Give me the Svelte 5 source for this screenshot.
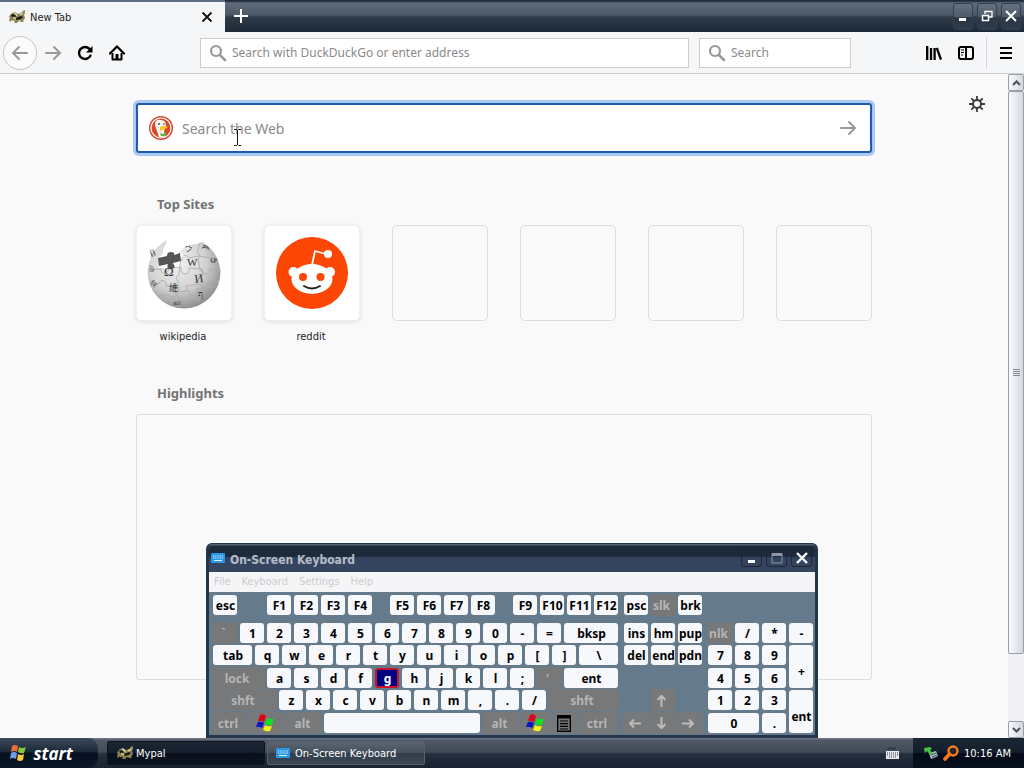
<script lang="ts">
	type Key = { t?: string; w?: number; off?: boolean; gap?: boolean; on?: boolean; icon?: string };

	const k = (t: string, w = 24): Key => ({ t, w });
	const off = (t: string, w = 24): Key => ({ t, w, off: true });
	const gap = (w: number): Key => ({ w, gap: true });
	const keys = (s: string): Key[] => s.split(' ').map((t) => ({ t, w: 24, on: t === 'g' }));

	const fnRow: Key[] = [k('esc'), gap(24), ...keys('F1 F2 F3 F4'), gap(12), ...keys('F5 F6 F7 F8'), gap(12), ...keys('F9 F10 F11 F12')];
	const mainRows: Key[][] = [
		[off('`'), ...keys('1 2 3 4 5 6 7 8 9 0 - ='), k('bksp', 54)],
		[k('tab', 39), ...keys('q w e r t y u i o p [ ]'), k('\\', 39)],
		[off('lock', 51), ...keys('a s d f g h j k l ;'), off("'"), k('ent', 54)],
		[off('shft', 63), ...keys('z x c v b n m , . /'), off('shft', 69)],
		[off('ctrl', 33), { w: 35, off: true, icon: 'win' }, off('alt', 34), k(' ', 156), off('alt', 36), { w: 30, off: true, icon: 'win' }, { w: 21, off: true, icon: 'menu' }, off('ctrl', 39)]
	];
	const navTop: Key[] = [k('psc'), off('slk'), k('brk')];
	const navRows: Key[][] = [keys('ins hm pup'), keys('del end pdn'), [], [gap(24), { w: 24, off: true, icon: 'up' }], ['left', 'down', 'right'].map((icon) => ({ w: 24, off: true, icon }))];
	const numpad = ['nlk', '/', '*', '-', '7', '8', '9', '+', '4', '5', '6', '1', '2', '3', 'ent', '0', '.'];

	const turns: Record<string, number> = { up: 0, right: 90, down: 180, left: 270 };
	const sites = ['wikipedia', 'reddit', '', '', '', ''];
	const menus = ['File', 'Keyboard', 'Settings', 'Help'];
</script>

{#snippet magnifier()}
	<svg class="magnifier" width="18" height="18" viewBox="0 0 18 18" aria-hidden="true">
		<circle cx="7" cy="7" r="5" fill="none" stroke="#999" stroke-width="2.200" />
		<path d="M10.800 10.800L16 16" stroke="#999" stroke-width="2.600" stroke-linecap="round" />
	</svg>
{/snippet}

{#snippet critter()}
	<svg width="17" height="16" viewBox="0 0 17 16" aria-hidden="true">
		<path d="M1 6l2-2 3-1 3 2 3-1 2-2 2-1 0 3-1 2 1 3-2 3 1 1-3 0-2-2-2 3-3 0 1-2-3-1-2 2-1-2 1-2-1-1z" fill="#8a8258" />
		<path d="M2 6l3-1 2 2-2 2-2-1zM7 9l5-2 2 1-2 2-5 1z" fill="#181b12" />
		<path d="M5 4l2 1 1 2M11 6l3-2M4 8l3 2" stroke="#e7d49f" stroke-width="1.400" fill="none" />
		<path d="M3 12l3-2M9 12l4-1M14 2l2 1" stroke="#b19a43" />
	</svg>
{/snippet}

{#snippet keyboardIcon()}
	<svg width="14" height="10" viewBox="0 0 14 10" aria-hidden="true">
		<rect width="14" height="10" rx="1" fill="#2a98e8" />
		<path d="M2 3h10M2 5h10" stroke="#d7f1ff" stroke-width="1.200" stroke-dasharray="1 .8" />
		<path d="M3 7.500h8" stroke="#d7f1ff" stroke-width="1" />
	</svg>
{/snippet}

{#snippet glyph(name: string)}
	{#if name === 'win'}
		<svg width="19" height="18" viewBox="0 0 19 18" aria-hidden="true">
			<path d="M4 1q3-2 6 1l-2 6q-3-2-6-1z" fill="#e00018" />
			<path d="M11 4q3 2 7 1l-2 6q-4 1-7-1z" fill="#0ee321" />
			<path d="M2 8q3-1 6 1l-2 5q-3-2-6-1z" fill="#0710cb" />
			<path d="M9 11q3 2 7 1l-2 5q-3 1-7-1z" fill="#f5f215" />
		</svg>
	{:else if name === 'menu'}
		<svg width="14" height="17" viewBox="0 0 14 17" aria-hidden="true">
			<rect x=".7" y=".7" width="12.600" height="15.600" fill="#777" stroke="#000" stroke-width="1.400" />
			<path d="M1 2h12" stroke="#000" stroke-width="3" />
			<path d="M3 6h8M3 8.700h8M3 11.400h8M3 14h8" stroke="#000" stroke-width="1.200" />
		</svg>
	{:else}
		<svg width="13" height="13" viewBox="0 0 13 13" aria-hidden="true">
			<path d="M6.500 13V2M2.500 6l4-4 4 4" transform="rotate({turns[name]} 6.500 6.500)" fill="none" stroke="#bbb" stroke-width="2" />
		</svg>
	{/if}
{/snippet}

{#snippet keyRow(row: Key[])}
	<div class="row">
		{#each row as key}
			{#if key.gap}
				<span class="space" style="width: {key.w}px"></span>
			{:else}
				<button class="key" class:off={key.off} class:on={key.on} style="width: {key.w}px" aria-label={key.icon ?? (key.t === ' ' ? 'space' : key.t)}>
					{#if key.icon}{@render glyph(key.icon)}{:else}{key.t}{/if}
				</button>
			{/if}
		{/each}
	</div>
{/snippet}

<div class="screen">
	<header class="titlebar">
		<div class="tab">
			{@render critter()}
			<span>New Tab</span>
			<button aria-label="Close tab">
				<svg width="12" height="12" viewBox="0 0 12 12"><path d="M1.500 1.500l9 9M10.500 1.500l-9 9" stroke="#111" stroke-width="1.800" /></svg>
			</button>
		</div>
		<button class="new-tab" aria-label="New tab">
			<svg width="14" height="14" viewBox="0 0 14 14"><path d="M7 0v14M0 7h14" stroke="#fff" stroke-width="2" /></svg>
		</button>
		<div class="window-buttons">
			<button aria-label="Minimize"><svg width="12" height="12"><path d="M2 9.500h7" stroke="#fff" stroke-width="3" /></svg></button>
			<button aria-label="Restore"><svg width="12" height="12"><path d="M4 4V1.500h7V7H8" fill="none" stroke="#fff" stroke-width="1.300" /><path d="M1.500 5.500h6v5h-6zM1 5.500h7" fill="none" stroke="#fff" stroke-width="1.500" /></svg></button>
			<button aria-label="Close"><svg width="12" height="12"><path d="M1 1l10 10M11 1L1 11" stroke="#fff" stroke-width="2" /></svg></button>
		</div>
	</header>

	<nav class="toolbar">
		<button class="back" aria-label="Back">
			<svg width="18" height="16" viewBox="0 0 18 16"><path d="M16 8H2M8 2L2 8l6 6" fill="none" stroke="#999" stroke-width="2" stroke-linecap="round" /></svg>
		</button>
		<button class="tool" aria-label="Forward">
			<svg width="18" height="16" viewBox="0 0 18 16"><path d="M2 8h14M10 2l6 6-6 6" fill="none" stroke="#999" stroke-width="2" stroke-linecap="round" /></svg>
		</button>
		<button class="tool" aria-label="Reload">
			<svg width="16" height="16" viewBox="0 0 16 16"><path d="M12.500 4A6 6 0 1 0 13.500 10.500" fill="none" stroke="#000" stroke-width="2.400" stroke-linecap="round" /><path d="M15.500 1v6.500H9z" fill="#000" /></svg>
		</button>
		<button class="tool" aria-label="Home">
			<svg width="16" height="16" viewBox="0 0 16 16"><path d="M1 8.500L8 1.500l7 7" fill="none" stroke="#000" stroke-width="2.200" stroke-linecap="round" stroke-linejoin="round" /><path d="M3.500 8v6.500h9V8" fill="none" stroke="#000" stroke-width="2" stroke-linejoin="round" /><path d="M6.500 14V9h3v5z" fill="#000" /></svg>
		</button>
		<label class="field address">
			{@render magnifier()}
			<input aria-label="Address" placeholder="Search with DuckDuckGo or enter address" />
		</label>
		<label class="field quick">
			{@render magnifier()}
			<input aria-label="Search" placeholder="Search" />
		</label>
		<div class="tools">
			<button class="tool" aria-label="Library">
				<svg width="16" height="16" viewBox="0 0 16 16"><path d="M1.200 1v14M5 3v12M8.600 3v12M10.800 3l4.200 11.500" stroke="#000" stroke-width="2.300" /></svg>
			</button>
			<button class="tool" aria-label="Sidebars">
				<svg width="16" height="14" viewBox="0 0 16 14"><rect x="1" y="1" width="14" height="12" rx="2" fill="none" stroke="#000" stroke-width="2" /><path d="M8 1v12" stroke="#000" stroke-width="2" /><path d="M3 4h3M3 6.500h3M3 9h2" stroke="#000" /></svg>
			</button>
			<button class="tool menu" aria-label="Menu">
				<svg width="12" height="12" viewBox="0 0 12 12"><path d="M0 1h12M0 6h12M0 11h12" stroke="#000" stroke-width="2" /></svg>
			</button>
		</div>
	</nav>

	<div class="viewport">
		<main>
			<button class="gear" aria-label="Preferences">
				<svg width="16" height="16" viewBox="0 0 16 16">
					<circle cx="8" cy="8" r="4" fill="none" stroke="#3b3b3b" stroke-width="2" />
					<path d="M8 0v4M8 12v4M0 8h4M12 8h4M2.300 2.300l2.800 2.800M10.900 10.900l2.800 2.800M13.700 2.300l-2.800 2.800M5.100 10.900l-2.800 2.800" stroke="#3b3b3b" stroke-width="1.800" />
				</svg>
			</button>
			<div class="content">
				<form class="web-search">
					<svg width="24" height="24" viewBox="0 0 24 24" aria-hidden="true">
						<circle cx="12" cy="12" r="12" fill="#d9472c" />
						<circle cx="12" cy="12" r="10" fill="#dc4a2e" stroke="#fff" stroke-width="1.200" />
						<path d="M7 5q2-2 5-1 5 0 5 6l-2 5 1 6q-4 1-6 0L7 12q-2-4 0-7z" fill="#f5f3ec" />
						<path d="M11 11q4-2 8 0l-3 2-5 2z" fill="#f8c51c" />
						<path d="M11 17l3 1 3-2v4l-5 0z" fill="#61b44b" />
						<circle cx="10" cy="8" r="1" fill="#31566e" /><circle cx="15" cy="8" r=".8" fill="#31566e" />
					</svg>
					<input aria-label="Search the Web" placeholder="Search the Web" />
					<button type="button" aria-label="Go">
						<svg width="18" height="16" viewBox="0 0 18 16"><path d="M2 8h14M10 2l6 6-6 6" fill="none" stroke="#999" stroke-width="2" stroke-linecap="round" /></svg>
					</button>
					<svg class="caret" width="9" height="17" viewBox="0 0 9 17" aria-hidden="true"><path d="M1 .5h2.500l1 1 1-1H8M4.500 1v15M1 16.500h2.500l1-1 1 1H8" fill="none" stroke="#111" /></svg>
				</form>

				<h2>Top Sites</h2>
				<div class="sites">
					{#each sites as site}
						<a class="site" href="#top" aria-label={site || 'Empty tile'}>
							<span class="tile" class:filled={site}>
								{#if site === 'wikipedia'}
									<svg width="76" height="72" viewBox="0 0 76 72" aria-hidden="true">
										<defs>
											<radialGradient id="globe" cx=".4" cy=".35" r=".7">
												<stop offset="0" stop-color="#f4f4f4" />
												<stop offset=".55" stop-color="#d2d2d2" />
												<stop offset="1" stop-color="#858585" />
											</radialGradient>
											<clipPath id="shell">
												<path d="M21 3l-1 4-3 5 0 4-4 5 0 10 20-1 1-8 4-3-5-4 5-4 4 1 2-4 7-1 5-2q17 10 18.500 30a36.500 36.500 0 0 1-73 0Q3 13 21 3z" />
											</clipPath>
										</defs>
										<g clip-path="url(#shell)">
											<rect width="76" height="72" fill="url(#globe)" />
											<path d="M3 33l12-1q0 5 4 4t4-5l12-1q-1 7 4 7t4-6l13 1q0 6 4 5t4-5l12 0M2 46l11 1q1-5 5-3t2 5l13 1q-1 5 4 5t3-6l14-2q1 5 5 4t2-5l14-2M8 60l14-3q2 4 6 3t1-5l14-1q0 6 5 4t3-6l18-2M15 22l-2 10M34 18q5 2 0 8l-1 12q-5 2-1 6l0 26M54 6l-3 9q5 2 1 6l2 12q5 1 2 6l1 11q4 2 0 6l-5 9M34 21q6-5 9 0l9-2 20 3" fill="none" stroke="#aaa" stroke-width=".8" />
										</g>
										<path d="M12 21l9-2q0-4 4-4t3 3l6-2 1 8-8 2q4 6-2 6-5 0-3-5l-9 2z" fill="#555" />
										<g fill="#333" font-family="Liberation Serif, serif" font-size="11">
											<text x="18" y="39" font-size="13">Ω</text>
											<text x="41" y="29">W</text>
											<text x="49" y="46" font-size="12" transform="rotate(-7 49 46)">И</text>
											<text x="23" y="54" font-size="9" font-family="Noto Sans CJK SC, sans-serif">維</text>
											<text x="38" y="13" font-size="8" transform="rotate(15 38 13)">ウ</text>
											<text x="55" y="11" font-size="8" transform="rotate(35 55 11)">ም</text>
											<text x="64" y="22" font-size="9" transform="rotate(35 64 22)">ي</text>
											<text x="3" y="35" font-size="7">উ</text>
											<text x="4" y="48" font-size="7" transform="rotate(20 4 48)">ਵਿ</text>
											<text x="52" y="61" font-size="10">ף</text>
											<text x="27" y="68" font-size="7">வி</text>
											<text x="5" y="20" font-size="8" transform="rotate(-20 5 20)">Й</text>
										</g>
									</svg>
								{:else if site === 'reddit'}
									<svg width="72" height="72" viewBox="0 0 72 72" aria-hidden="true">
										<circle cx="36" cy="36" r="36" fill="#fc4605" />
										<circle cx="17.500" cy="35" r="5" fill="#fff" /><circle cx="54" cy="35" r="5" fill="#fff" />
										<ellipse cx="36" cy="42" rx="20.500" ry="15" fill="#fff" />
										<path d="M36 28l3-14 11 3" fill="none" stroke="#fff" stroke-width="1.800" />
										<circle cx="52" cy="17" r="4" fill="#fff" />
										<circle cx="27" cy="40" r="4" fill="#fc4605" /><circle cx="44.500" cy="40" r="4" fill="#fc4605" />
										<path d="M28 49q8 5 16 0" fill="none" stroke="#222" stroke-width="2" stroke-linecap="round" />
									</svg>
								{/if}
							</span>
							<span class="name">{site}</span>
						</a>
					{/each}
				</div>

				<h2>Highlights</h2>
				<div class="highlights"></div>
			</div>
		</main>
		<div class="scrollbar" aria-hidden="true">
			<div class="arrow"><svg width="9" height="6"><path d="M1 5l3.500-3.500L8 5" fill="none" stroke="#4c505c" stroke-width="2" /></svg></div>
			<div class="thumb"><svg width="7" height="7"><path d="M0 .5h7M0 2.500h7M0 4.500h7M0 6.500h7" stroke="#858b96" /></svg></div>
			<div class="track"></div>
			<div class="arrow"><svg width="9" height="6"><path d="M1 1l3.500 3.500L8 1" fill="none" stroke="#4c505c" stroke-width="2" /></svg></div>
		</div>
	</div>

	<section class="osk" aria-label="On-Screen Keyboard">
		<div class="osk-title">
			{@render keyboardIcon()}
			<strong>On-Screen Keyboard</strong>
			<button aria-label="Minimize keyboard"><svg width="12" height="12"><path d="M2 9.500h7" stroke="#fff" stroke-width="3" /></svg></button>
			<button aria-label="Maximize keyboard"><svg width="12" height="12"><path d="M1 2.500h10" stroke="#8e98a5" stroke-width="3" /><rect x="1" y="2" width="10" height="9" fill="none" stroke="#8e98a5" /></svg></button>
			<button aria-label="Close keyboard"><svg width="12" height="12"><path d="M1 1l10 10M11 1L1 11" stroke="#fff" stroke-width="2.400" /></svg></button>
		</div>
		<div class="osk-menu">
			{#each menus as menu}<button>{menu}</button>{/each}
		</div>
		<div class="board">
			<div class="block">
				{@render keyRow(fnRow)}
				<div class="rows">
					{#each mainRows as row}{@render keyRow(row)}{/each}
				</div>
			</div>
			<div class="block">
				{@render keyRow(navTop)}
				<div class="rows">
					{#each navRows as row}{@render keyRow(row)}{/each}
				</div>
			</div>
			<div class="numpad">
				{#each numpad as n}
					<button class="key" class:off={n === 'nlk'} class:tall={n === '+' || n === 'ent'} class:wide={n === '0'}>{n}</button>
				{/each}
			</div>
		</div>
	</section>

	<footer>
		<button class="start">
			<svg width="18" height="18" viewBox="0 0 18 18" aria-hidden="true">
				<path d="M3 2q3-2 6 0L8 8q-3-2-6 0z" fill="#ef6c35" />
				<path d="M10 3q3 2 7 0l-2 6q-3 1-6-1z" fill="#85c743" />
				<path d="M2 9q3-2 6 0l-1 6q-3-2-6 0z" fill="#719ee9" />
				<path d="M9 10q3 2 6 0l-1 6q-3 2-6 0z" fill="#f8c93b" />
			</svg>
			start
		</button>
		<button class="task active">{@render critter()}Mypal</button>
		<button class="task">{@render keyboardIcon()}On-Screen Keyboard</button>
		<svg class="layout" width="13" height="13" viewBox="0 0 13 13" aria-hidden="true">
			<path d="M3 3V1h3v1h3V0" fill="none" stroke="#222b36" />
			<rect y="4" width="13" height="8" fill="#e8eaed" />
			<path d="M1 6h11M1 8h11M3 10h7" stroke="#303844" stroke-dasharray="1 1" />
		</svg>
		<div class="tray">
			<svg width="14" height="14" viewBox="0 0 14 14" aria-hidden="true">
				<path d="M5 7l7-2 2 5-7 3z" fill="#aebdc6" /><path d="M7 9l5-2M8 11l5-2" stroke="#43515c" />
				<path d="M0 2l6-1 2 2-2 1 3 4-3 1-3-4-2 2z" fill="#43c341" />
			</svg>
			<svg width="16" height="16" viewBox="0 0 16 16" aria-hidden="true">
				<circle cx="10" cy="6" r="4.500" fill="#28242a" stroke="#f57b20" stroke-width="2.400" />
				<path d="M6.500 9L2 14" stroke="#f57b20" stroke-width="3.600" stroke-linecap="round" />
			</svg>
			<time>10:16 AM</time>
		</div>
	</footer>
</div>

<style>
	:global(body) {
		margin: 0;
	}

	.screen {
		position: relative;
		display: flex;
		flex-direction: column;
		height: 100vh;
		overflow: hidden;
		background: #f9f9fa;
		color: #222;
		font-family: 'DejaVu Sans Condensed', 'Noto Sans', sans-serif;
		font-size: 11px;
	}

	button,
	input {
		font: inherit;
		color: inherit;
		border: 0;
		padding: 0;
		margin: 0;
		background: none;
	}

	button {
		display: flex;
		align-items: center;
		justify-content: center;
	}

	input {
		outline: 0;
		flex: 1;
		min-width: 0;
	}

	input::placeholder {
		color: #8a8a8a;
		opacity: 1;
	}

	svg {
		flex: none;
	}

	.titlebar {
		display: flex;
		height: 32px;
		background: linear-gradient(#1d2a3a 0 1px, #5f6b7a 3px, #4d5966 15px, #303b49 17px, #1e2938);
	}

	.tab {
		display: flex;
		align-items: center;
		gap: 4px;
		box-sizing: border-box;
		width: 225px;
		padding: 0 12px 0 9px;
		border-top: 2px solid #5e6d84;
		background: #f5f6f7;
	}

	.tab span {
		flex: 1;
	}

	.new-tab {
		width: 32px;
	}

	.window-buttons {
		display: flex;
		align-items: center;
		gap: 4px;
		margin-left: auto;
		padding-right: 3px;
	}

	.window-buttons button {
		width: 20px;
		height: 27px;
		border: 1px solid #344050;
		border-radius: 3px;
		box-sizing: border-box;
		background: linear-gradient(#657080, #505b69 50%, #2b3645 55%, #303c4b);
	}

	.toolbar {
		display: flex;
		align-items: center;
		box-sizing: border-box;
		height: 42px;
		padding: 0 0 0 3px;
		border-bottom: 1px solid #ccc;
		background: #f5f6f7;
	}

	.back {
		box-sizing: border-box;
		width: 34px;
		height: 34px;
		border: 1px solid #c5c5c8;
		border-radius: 50%;
		background: #fbfbfb;
	}

	.tool {
		width: 32px;
		height: 32px;
	}

	.field {
		display: flex;
		align-items: center;
		gap: 5px;
		box-sizing: border-box;
		height: 30px;
		padding: 0 8px;
		border: 1px solid #ccc;
		background: #fff;
		font-family: 'Noto Sans', sans-serif;
		font-size: 12px;
	}

	.address {
		flex: 1;
		margin-left: 67px;
	}

	.quick {
		width: 152px;
		margin-left: 10px;
	}

	.tools {
		display: flex;
		margin-left: 67px;
	}

	.menu {
		width: 38px;
		margin-left: 4px;
		border-left: 1px solid #d8d8da;
	}

	.viewport {
		flex: 1;
		display: flex;
		min-height: 0;
	}

	main {
		position: relative;
		flex: 1;
		display: flex;
		justify-content: center;
		overflow: hidden;
	}

	.gear {
		position: absolute;
		top: 22px;
		right: 23px;
	}

	.content {
		width: 736px;
		padding-top: 29px;
		font-family: 'Noto Sans', sans-serif;
	}

	.web-search {
		position: relative;
		display: flex;
		align-items: center;
		gap: 9px;
		box-sizing: border-box;
		height: 50px;
		padding: 0 13px 0 11px;
		border: 2px solid #205bac;
		border-radius: 3px;
		box-shadow: 0 0 0 3px #a8c9f5;
		background: #fff;
		font-size: 14px;
	}

	.caret {
		position: absolute;
		left: 95px;
		top: 24px;
	}

	h2 {
		margin: 41px 0 11px 21px;
		font-size: 13px;
		line-height: 20px;
		color: #737373;
	}

	.sites {
		display: flex;
		gap: 32px;
	}

	.site {
		display: flex;
		flex-direction: column;
		align-items: center;
		color: #222;
		text-decoration: none;
		font-family: 'DejaVu Sans Condensed', 'Noto Sans', sans-serif;
	}

	.tile {
		display: flex;
		align-items: center;
		justify-content: center;
		box-sizing: border-box;
		width: 96px;
		height: 96px;
		border: 1px solid #ddd;
		border-radius: 5px;
	}

	.tile.filled {
		border-color: #eee;
		background: #fff;
		box-shadow: 0 1px 4px #ddd;
	}

	.name {
		height: 20px;
		padding: 6px 2px 0 0;
		line-height: 20px;
	}

	.highlights {
		height: 264px;
		border: 1px solid #ddd;
		border-radius: 3px;
	}

	.sites + h2 {
		margin-top: 36px;
	}

	.scrollbar {
		display: flex;
		flex-direction: column;
		width: 16px;
		background: #f0f0f5;
	}

	.arrow,
	.thumb {
		display: flex;
		align-items: center;
		justify-content: center;
		box-sizing: border-box;
		border: 1px solid #999da8;
		border-radius: 2px;
		background: linear-gradient(90deg, #fafafc, #d5d7df);
	}

	.arrow {
		height: 17px;
	}

	.thumb {
		flex: 563;
	}

	.track {
		flex: 67;
	}

	.osk {
		position: absolute;
		left: 206px;
		bottom: 30px;
		box-sizing: border-box;
		border: 3px solid #26364a;
		border-top-width: 1px;
		border-radius: 6px 6px 0 0;
		background: #657b8c;
		font-family: 'Noto Sans', sans-serif;
	}

	.osk-title {
		display: flex;
		align-items: center;
		gap: 4px;
		height: 28px;
		padding: 0 3px 0 2px;
		border-radius: 5px 5px 0 0;
		background: linear-gradient(#526174 0 1px, #1d2a3a 2px 12px, #344460 14px, #35445e);
		color: #b6bdc8;
	}

	.osk-title strong {
		flex: 1;
		padding: 3px 0 0 1px;
		font-family: 'DejaVu Sans Condensed', 'Noto Sans', sans-serif;
		font-size: 12px;
	}

	.osk-title button {
		width: 21px;
		height: 18px;
		border: 1px solid #1b2738;
		border-radius: 3px;
		box-sizing: border-box;
	}

	.osk-menu {
		display: flex;
		gap: 11px;
		height: 20px;
		padding: 0 5px;
		background: #f5f5f8;
		color: #ccc;
		font-family: 'DejaVu Sans Condensed', 'Noto Sans', sans-serif;
	}

	.osk-menu button {
		height: 18px;
	}

	.board {
		display: flex;
		gap: 6px;
		padding: 3px 2px 2px 4px;
	}

	.block {
		display: flex;
		flex-direction: column;
		gap: 8px;
	}

	.rows {
		display: grid;
		grid-template-rows: 20px 21px 20px 21px 20px;
		row-gap: 2px;
	}

	.row {
		display: flex;
		gap: 3px;
		height: 20px;
	}

	.key {
		height: 20px;
		padding-left: 1px;
		border-radius: 3px;
		background: #f6f8fc;
		color: #000;
		font-size: 12px;
		font-weight: bold;
		white-space: nowrap;
		box-sizing: border-box;
	}

	.key.off {
		padding: 0 3px 0 0;
		background: #777879;
		color: #b5b5b5;
		box-shadow: 0 0 0 1px #777879;
	}

	.key.on {
		border: 2px solid #c8142c;
		background: #000080;
		color: #fff;
	}

	.numpad {
		display: grid;
		grid-template-columns: repeat(4, 24px);
		grid-template-rows: 20px 21px 20px 21px 20px;
		gap: 2px 3px;
		margin-top: 28px;
	}

	.key.tall {
		grid-row: span 2;
		height: auto;
		padding-top: 10px;
	}

	.wide {
		grid-column: span 2;
	}

	footer {
		position: relative;
		display: flex;
		align-items: center;
		height: 30px;
		background: linear-gradient(#6d7682 0 1px, #505a67 2px, #414b58 14px, #242e3d 16px, #182230);
		color: #fff;
	}

	.start {
		gap: 6px;
		width: 98px;
		height: 30px;
		padding-right: 16px;
		border-radius: 0 10px 10px 0;
		background: linear-gradient(#3c4a5a, #1c2a3a 45%, #07111f 50%, #0b1728);
		font-family: 'Open Sans', sans-serif;
		font-size: 17px;
		font-weight: bold;
		font-style: italic;
		box-sizing: border-box;
	}

	.task {
		justify-content: flex-start;
		gap: 5px;
		width: 158px;
		height: 24px;
		margin-left: 2px;
		padding-left: 8px;
		border: 1px solid #55606d;
		border-radius: 2px;
		box-sizing: border-box;
		background: linear-gradient(#5b6571, #47515e 48%, #333e4c 52%, #3b4654);
	}

	.task.active {
		gap: 2px;
		margin-left: 9px;
		padding-left: 9px;
		border-color: #0c1320;
		background: linear-gradient(#1c2635, #141d2b 48%, #080f1b 52%, #0a1220);
	}

	.layout {
		margin-left: auto;
		margin-right: 14px;
	}

	.tray {
		display: flex;
		align-items: center;
		gap: 5px;
		box-sizing: border-box;
		height: 30px;
		padding: 0 13px 0 11px;
		background: linear-gradient(#1c2736, #131d2c 48%, #040b18 52%, #07101e);
	}
</style>
